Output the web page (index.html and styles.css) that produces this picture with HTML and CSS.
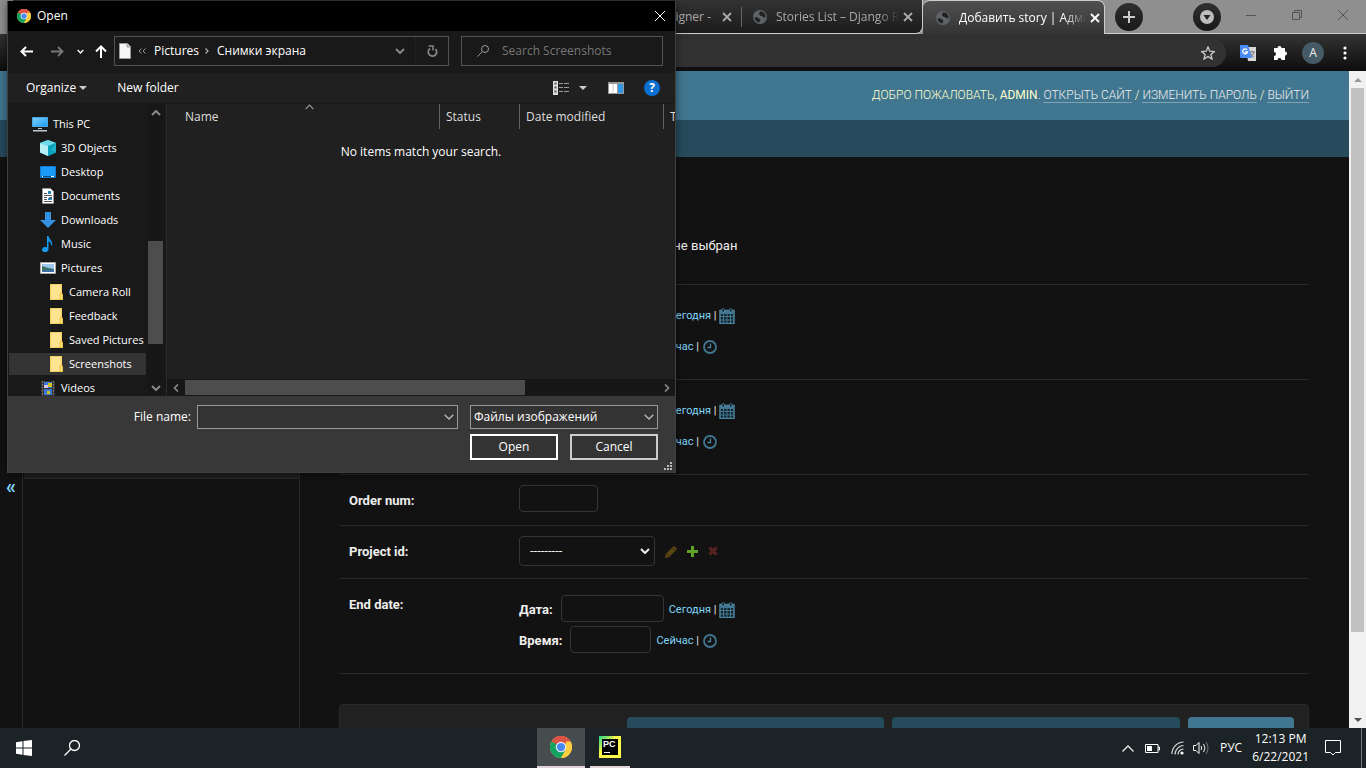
FILE: index.html
```html
<!DOCTYPE html>
<html lang="ru">
<head>
<meta charset="utf-8">
<title>Добавить story | Администрирование</title>
<link rel="stylesheet" href="styles.css">
</head>
<body>
<svg class="defs" aria-hidden="true">
  <defs>
    <linearGradient id="pc" x1="0" y1="0" x2="1" y2="1"><stop offset="0" stop-color="#21d789"/><stop offset=".3" stop-color="#b8ea5a"/><stop offset=".4" stop-color="#fcf84a"/></linearGradient>
    <linearGradient id="screen" x1="0" y1="0" x2="1" y2="1"><stop offset="0" stop-color="#7cd0ff"/><stop offset="1" stop-color="#1b9bf0"/></linearGradient>
    <symbol id="chrome" viewBox="0 0 24 24">
      <circle cx="12" cy="12" r="12" fill="#ffcd40"/>
      <path d="M12 12 1.6 6A12 12 0 0 1 22.4 6z" fill="#de5347"/><path d="M12 6h10.4A12 12 0 0 0 1.6 6l5.2 9z" fill="#de5347"/>
      <path d="M1.6 6A12 12 0 0 0 12 24l5.2-9L12 12 6.8 9z" fill="#14a361"/><path d="M1.6 6 6.8 15 12 12z" fill="#14a361"/>
      <path d="M22.4 6A12 12 0 0 1 12 24l5.2-9V6z" fill="#ffcd40"/>
      <circle cx="12" cy="12" r="5.7" fill="#f1f1f1"/><circle cx="12" cy="12" r="4.5" fill="#4688f4"/>
    </symbol>
    <symbol id="globe" viewBox="0 0 14 14"><circle cx="7" cy="7" r="7" fill="#5f6368"/><path d="M1.5 7.5c2-.8 3.600 0 4.200.8.500.8 2 .4 1.600 2-.3 1-.8 1.200-.8 2.200C3.500 12.300 1.600 10 1.500 7.500zM7.500 1.300C6 2.500 6.800 3.200 5.600 4c1.400.6 1.200 2 2.600 2s1.500 1.200 2.700 1.200c.8 0 1.300.5 1.700 0C12.700 4 10.500 1.500 7.500 1.300z" fill="#222"/></symbol>
    <symbol id="folder" viewBox="0 0 13 16"><path d="M0 0h12v10h1v6H0z" fill="#ffe48f"/><path d="M.5.5h11v9.500M.5 0v15.500h10" fill="none" stroke="#f2cf5f"/><path d="M10 10h2.500v5.500H10z" fill="#ffe48f" stroke="#e8bd3c"/></symbol>
    <symbol id="calendar" viewBox="0 0 16 16"><path d="M1 3h14v12.500H1z" fill="#16242c"/><path d="M1 5h14M1 8.500h14M1 12h14M4.500 5v10M8 5v10M11.500 5v10" stroke="#417690" fill="none"/><path d="M1 2.500h14v13H1z" fill="none" stroke="#4a83a0" stroke-width="1.500"/><path d="M1 3h14v3H1z" fill="#417690"/><path d="M3 4V1.500q1.300-2 2.600 0V4zM10.400 4V1.500q1.300-2 2.600 0V4z" fill="#121212" stroke="#4a83a0"/></symbol>
    <symbol id="clock" viewBox="0 0 14 14"><circle cx="7" cy="7" r="6" fill="none" stroke="#417690" stroke-width="1.800"/><path d="M7.500 3.500v4h-3" fill="none" stroke="#4a83a0" stroke-width="1.300"/></symbol>
    <symbol id="down" viewBox="0 0 10 6"><path d="m.7.700 4.300 4.300 4.300-4.300" fill="none" stroke="currentColor" stroke-width="1.300"/></symbol>
    <symbol id="bold-down" viewBox="0 0 10 6"><path d="m1 1 4 4 4-4" fill="none" stroke="currentColor" stroke-width="2"/></symbol>
    <symbol id="close" viewBox="0 0 10 10"><path d="m1 1 8 8M9 1l-8 8" stroke="currentColor" stroke-width="1.800"/></symbol>
    <symbol id="thin-close" viewBox="0 0 10 10"><path d="m0 0 10 10M10 0 0 10" stroke="currentColor"/></symbol>
  </defs>
</svg>

<header class="browser">
  <div class="tabs">
    <div class="tab"></div><div class="tab"></div><div class="tab"></div>
    <div class="tab"><svg class="fav"><use href="#globe"/></svg><span class="tab-title tab-end">Designer -</span><button class="tab-close" aria-label="Close tab"><svg><use href="#close"/></svg></button></div>
    <div class="tab last"><svg class="fav"><use href="#globe"/></svg><span class="tab-title">Stories List – Django R</span><button class="tab-close" aria-label="Close tab"><svg><use href="#close"/></svg></button></div>
    <div class="tab active"><svg class="fav"><use href="#globe"/></svg><span class="tab-title">Добавить story | Адми</span><button class="tab-close" aria-label="Close tab"><svg><use href="#close"/></svg></button></div>
    <div class="strip">
      <button class="round" aria-label="New tab"><svg width="12" height="12" viewBox="0 0 12 12"><path d="M6 0v12M0 6h12" stroke="#ccc" stroke-width="2"/></svg></button>
      <button class="round media" aria-label="Media"><svg width="14" height="14" viewBox="0 0 14 14"><circle cx="7" cy="7" r="7" fill="#bdbdbd"/><path d="M3.500 5h7L7 10z" fill="#222"/></svg></button>
      <div class="wins">
        <button aria-label="Minimize"><svg width="10" height="10" viewBox="0 0 10 10"><path d="M0 5.500h10" stroke="#555"/></svg></button>
        <button aria-label="Restore"><svg width="10" height="10" viewBox="0 0 10 10"><path d="M.5 2.500h7v7h-7zM2.500 2.500v-2h7v7h-2" fill="none" stroke="#555"/></svg></button>
        <button aria-label="Close"><svg width="10" height="10"><use href="#thin-close"/></svg></button>
      </div>
    </div>
  </div>
  <div class="toolbar">
    <div class="omnibox"><svg width="14" height="14" viewBox="0 0 14 14"><path d="m7 1 1.800 4.200 4.600.4-3.500 3 1.100 4.400-4-2.400L3 13l1.100-4.400-3.500-3 4.600-.4z" fill="none" stroke="#ccc" stroke-width="1.300"/></svg></div>
    <button class="tool" aria-label="Translate"><svg width="16" height="16" viewBox="0 0 16 16"><path d="M6 2h10v14H8z" fill="#d8d8d8"/><path d="M9 7h6M12 5.500V7M14 7c-.5 2.500-2 4-4 5M10.500 8c.5 2 2 3.500 3.500 4" stroke="#777" fill="none"/><path d="M0 0h8l4 13H1q-1 0-1-1z" fill="#4b8bf5"/><path d="M7.200 5A2.400 2.400 0 1 0 7.500 7H5" fill="none" stroke="#fff" stroke-width="1.300"/></svg></button>
    <button class="tool" aria-label="Extensions"><svg width="15" height="15" viewBox="0 0 15 15"><path d="M1 3h3.500a2 2 0 1 1 4 0H12v3.500a2 2 0 1 1 0 4V15H8.500a2 2 0 1 0-4 0H1v-4a2 2 0 1 0 0-4z" fill="#fff"/></svg></button>
    <button class="avatar">A</button>
    <button class="tool dots" aria-label="Menu"><svg width="4" height="14" viewBox="0 0 4 14"><g fill="#fff"><circle cx="2" cy="2" r="1.600"/><circle cx="2" cy="7" r="1.600"/><circle cx="2" cy="12" r="1.600"/></g></svg></button>
  </div>
</header>

<div class="viewport">
  <div class="admin">
    <div class="admin-header">
      <div class="user-tools">Добро пожаловать, <strong>admin</strong>. <a href="#site">Открыть сайт</a> / <a href="#password">Изменить пароль</a> / <a href="#logout">Выйти</a></div>
    </div>
    <div class="crumbs"></div>
    <div class="body">
      <button class="toggle" aria-label="Toggle navigation"><span>«</span></button>
      <nav class="sidebar"><div class="module"></div></nav>
      <main class="content">
        <div class="row file-row"><div class="fields"><span>Файл не выбран</span></div></div>
        <div class="row date-row"><div class="fields">
          <div class="line"><label for="d1">Дата:</label><input id="d1" class="date"><span class="hint"><a href="#today">Сегодня</a> |</span><svg class="cal"><use href="#calendar"/></svg></div>
          <div class="line"><label for="t1">Время:</label><input id="t1" class="time"><span class="hint"><a href="#now">Сейчас</a> |</span><svg class="clk"><use href="#clock"/></svg></div>
        </div></div>
        <div class="row date-row"><div class="fields">
          <div class="line"><label for="d2">Дата:</label><input id="d2" class="date"><span class="hint"><a href="#today">Сегодня</a> |</span><svg class="cal"><use href="#calendar"/></svg></div>
          <div class="line"><label for="t2">Время:</label><input id="t2" class="time"><span class="hint"><a href="#now">Сейчас</a> |</span><svg class="clk"><use href="#clock"/></svg></div>
        </div></div>
        <div class="row order"><label class="name" for="order">Order num:</label><div class="fields"><input id="order" class="num"></div></div>
        <div class="row project"><label class="name" for="project">Project id:</label><div class="fields related">
          <span class="select"><select id="project"><option>---------</option></select><svg><use href="#bold-down"/></svg></span>
          <a href="#edit" aria-label="Edit"><svg width="12" height="12" viewBox="0 0 12 12"><path d="m0 12 .8-4L8 .8q1-1 2 0l1.200 1.200q1 1 0 2L4 11.200z" fill="#5c4712"/><path d="m2 8 2 2M7.500 2l2.500 2.500" stroke="#2c220b"/></svg></a>
          <a href="#add" aria-label="Add"><svg width="11" height="11" viewBox="0 0 11 11"><path d="M4 0h3v4h4v3H7v4H4V7H0V4h4z" fill="#5fa225"/></svg></a>
          <a href="#delete" aria-label="Delete"><svg width="10" height="10" viewBox="0 0 10 10"><path d="m1.500 1.500 7 7m0-7-7 7" stroke="#552222" stroke-width="3.200"/></svg></a>
        </div></div>
        <div class="row date-row"><label class="name" for="d3">End date:</label><div class="fields">
          <div class="line"><label for="d3">Дата:</label><input id="d3" class="date"><span class="hint"><a href="#today">Сегодня</a> |</span><svg class="cal"><use href="#calendar"/></svg></div>
          <div class="line"><label for="t3">Время:</label><input id="t3" class="time"><span class="hint"><a href="#now">Сейчас</a> |</span><svg class="clk"><use href="#clock"/></svg></div>
        </div></div>
        <div class="submit"><button class="b-another" aria-label="Save and add another"></button><button class="b-continue" aria-label="Save and continue"></button><button class="b-save" aria-label="Save"></button></div>
      </main>
    </div>
  </div>
  <div class="page-scroll"><i class="tri up"></i><i class="thumb"></i><i class="tri dn"></i></div>
</div>

<footer class="taskbar">
  <button class="start" aria-label="Start"><svg width="16" height="16" viewBox="0 0 16 16"><path d="M0 2.200 6.500 1.300v6.200H0zM7.500 1.100 16 0v7.500H7.500zM0 8.500h6.500v6.200L0 13.800zM7.500 8.500H16V16l-8.500-1.100z" fill="#fff"/></svg></button>
  <button class="find" aria-label="Search"><svg width="16" height="16" viewBox="0 0 16 16"><circle cx="10.500" cy="5.500" r="5" fill="none" stroke="#fff" stroke-width="1.300"/><path d="M7 9 .5 15.500" stroke="#fff" stroke-width="1.300"/></svg></button>
  <div class="apps">
    <button class="app current" aria-label="Chrome"><svg width="22" height="22"><use href="#chrome"/></svg></button>
    <button class="app" aria-label="PyCharm"><svg width="22" height="22" viewBox="0 0 22 22"><path d="M0 0h22v22H0z" fill="url(#pc)"/><path d="M3 3h16v16H3z"/><text x="4" y="11" class="pc">PC</text><path d="M5 16h6v1H5z" fill="#fff"/></svg></button>
  </div>
  <div class="tray">
    <svg width="12" height="7" viewBox="0 0 12 7"><path d="m.5 6.500 5.500-5.500 5.500 5.500" fill="none" stroke="#eee" stroke-width="1.300"/></svg>
    <svg class="battery" width="15" height="9" viewBox="0 0 15 9"><path d="M.5.500h12.500v8H.5zM13 3h1.500v3H13" fill="none" stroke="#fff"/><path d="M2 2h5v5H2z" fill="#fff"/></svg>
    <svg class="wifi" width="13" height="14" viewBox="0 0 13 14"><path d="M1 13A12 12 0 0 1 12.500 1M4 13.500a9 9 0 0 1 8.500-9M7 13.500A6 6 0 0 1 12.500 8" fill="none" stroke="#ddd" stroke-width="1.200"/><circle cx="11" cy="12" r="1.600" fill="#fff"/></svg>
    <svg class="sound" width="17" height="14" viewBox="0 0 17 14"><path d="M.5 4.500h2.500L6 1.500v11L3 9.500H.5z" fill="none" stroke="#fff"/><path d="M8 5q1.500 2 0 4M10.500 3q3 4 0 8" fill="none" stroke="#eee"/><path d="M13 1q4 6 0 12" fill="none" stroke="#777"/></svg>
    <span class="lang">РУС</span>
    <span class="time-now">12:13 PM<br>6/22/2021</span>
    <svg class="note" width="16" height="16" viewBox="0 0 16 16"><path d="M.5.500h15v12h-5L8 15l-2.500-2.500h-5z" fill="none" stroke="#fff"/></svg>
    <i class="peek"></i>
  </div>
</footer>

<section class="dialog" role="dialog" aria-label="Open">
  <div class="d-title"><svg width="14" height="14"><use href="#chrome"/></svg><span>Open</span><button aria-label="Close"><svg width="10" height="10"><use href="#thin-close"/></svg></button></div>
  <div class="d-nav">
    <button class="back" aria-label="Back"><svg width="13" height="11" viewBox="0 0 13 11"><path d="M13 5.500H1.500M6 1 1.500 5.500 6 10" fill="none" stroke="#fff" stroke-width="2"/></svg></button>
    <button class="fwd" aria-label="Forward"><svg width="13" height="11" viewBox="0 0 13 11"><path d="M0 5.500h11.500M7 1l4.500 4.500L7 10" fill="none" stroke="#777" stroke-width="1.800"/></svg></button>
    <button class="recent" aria-label="Recent"><svg width="7" height="5"><use href="#bold-down"/></svg></button>
    <button class="upward" aria-label="Up"><svg width="12" height="13" viewBox="0 0 12 13"><path d="M6 13V1.500M1 6.500l5-5 5 5" fill="none" stroke="#fff" stroke-width="2"/></svg></button>
    <div class="address">
      <svg width="12" height="16" viewBox="0 0 12 16"><path d="M.5.500h8l3 3v12H.5z" fill="#f5f5f5" stroke="#999"/><path d="M8 .5V4h3.500" fill="#ccc" stroke="#999"/></svg>
      <svg class="laq" width="8" height="6" viewBox="0 0 8 6"><path d="M3.500.500 1 3l2.500 2.500M7.500.500 5 3l2.500 2.500" fill="none" stroke="#999"/></svg>
      <span>Pictures</span>
      <svg class="sep" width="4" height="6" viewBox="0 0 4 6"><path d="M.5.500 3 3 .5 5.500" fill="none" stroke="#aaa" stroke-width="1.300"/></svg>
      <span>Снимки экрана</span>
      <svg class="hist" width="10" height="6"><use href="#bold-down"/></svg>
      <button class="refresh" aria-label="Refresh"><svg width="11" height="12" viewBox="0 0 11 12"><path d="M3 3.500A4.200 4.200 0 1 0 8.500 4" fill="none" stroke="#888" stroke-width="1.700"/><path d="M1.500 1H6v4.500" fill="none" stroke="#888" stroke-width="1.500"/></svg></button>
    </div>
    <div class="search"><svg width="12" height="12" viewBox="0 0 12 12"><circle cx="8" cy="4" r="3.500" fill="none" stroke="#999"/><path d="M5.500 6.500.500 11.500" stroke="#999"/></svg><input aria-label="Search" placeholder="Search Screenshots"></div>
  </div>
  <div class="d-tools">
    <button>Organize <i class="tri dn"></i></button><button class="newf">New folder</button>
    <button class="view" aria-label="View"><svg width="17" height="14" viewBox="0 0 17 14"><path d="M0 0h5v14H0z" fill="#ddd"/><path d="M1.500 1.500h2v2h-2zM1.500 5.500h2v2h-2zM1.500 9.500h2v2h-2z" fill="#555"/><path d="M6 2.500h4m1 0h5M6 6.500h4m1 0h5M6 10.500h4m1 0h5" stroke="#999"/></svg><i class="tri dn"></i></button>
    <button class="pane" aria-label="Preview"><svg width="16" height="12" viewBox="0 0 16 12"><path d="M0 0h16v12H0z" fill="#999"/><path d="M1 2h8v9H1z" fill="#fff"/><path d="M10 2h5v9h-5z" fill="#2f9ae8"/><path d="M5 2v9" stroke="#ccc"/></svg></button>
    <button class="help" aria-label="Help"><span>?</span></button>
  </div>
  <div class="d-main">
    <ul class="tree">
      <li class="l0"><svg width="16" height="16" viewBox="0 0 16 16"><path d="M.5 1.500h15v9H.5z" fill="url(#screen)" stroke="#4ba9e8"/><path d="M6 12h4v1H6zM1 14h14v1.500H1z" fill="#b8cbd8"/></svg>This PC</li>
      <li><svg width="16" height="16" viewBox="0 0 16 16"><path d="M0 3 8 0l8 3v9.500L8 16l-8-3.500z" fill="#20b2c8"/><path d="M0 3 8 0l8 3-8 3z" fill="#6fdbe8"/><path d="M0 3l8 3v10l-8-3.500z" fill="#b5eef4"/><path d="m8 6 8-3-5 7 5 2.500L8 16z" fill="#08a3bb"/></svg>3D Objects</li>
      <li><svg width="16" height="16" viewBox="0 0 16 16"><path d="M.5 2.500h15v11H.5z" fill="#1b9bf5" stroke="#0d7ed0"/><path d="M1 12h14v1H1z" fill="#064f90"/><path d="M2 12h1v1H2zM11 12h3v1h-3z" fill="#fff"/></svg>Desktop</li>
      <li><svg width="16" height="16" viewBox="0 0 16 16"><path d="M2.500.500h8l3 3v12h-11z" fill="#fff" stroke="#999"/><path d="M4 5.500h3M4 7.500h8M4 9.500h3m5 0H9M4 11.500h3M4 13.500h8" stroke="#555"/><path d="M8 3h3v3H8zM8 10h4v2H8z" fill="#2780b8"/></svg>Documents</li>
      <li><svg width="16" height="16" viewBox="0 0 16 16"><path d="M5 0h6v8h5l-8 8-8-8h5z" fill="#3391e2"/></svg>Downloads</li>
      <li><svg width="16" height="16" viewBox="0 0 16 16"><path d="M7 0h1.500c.5 3.500 4.500 4.500 3.500 9.500h-1c.3-2.500-.8-3.500-2.500-4.500v8c0 4-6.500 4-6.500.8 0-2.500 2.500-3.500 5-2.500z" fill="#159cf0"/></svg>Music</li>
      <li><svg width="16" height="16" viewBox="0 0 16 16"><path d="M.5 2.500h15v11H.5z" fill="#fff" stroke="#aaa"/><path d="M2 4h12v8H2z" fill="#9cc8ee"/><path d="M2 6q5 2 12 3v3H2z" fill="#3e6f65"/><path d="M2 11q6-2 12-1v2H2z" fill="#3b6fae"/></svg>Pictures</li>
      <li class="l2"><svg class="fold"><use href="#folder"/></svg>Camera Roll</li>
      <li class="l2"><svg class="fold"><use href="#folder"/></svg>Feedback</li>
      <li class="l2"><svg class="fold"><use href="#folder"/></svg>Saved Pictures</li>
      <li class="l2 sel"><svg class="fold"><use href="#folder"/></svg>Screenshots</li>
      <li><svg width="16" height="16" viewBox="0 0 16 16"><path d="M1 1h14v15H1z" fill="#333"/><path d="M2.500 1v15M13.500 1v15" stroke="#888" stroke-dasharray="1.500 1.500"/><path d="M4 2h8v6H4zM4 9h8v6H4z" fill="#3b78d8"/><path d="M4 5h4v3H4z" fill="#d8c5e8"/><path d="M8 3h4v4H8zM7 11h3v3H7z" fill="#d0c020"/></svg>Videos</li>
    </ul>
    <div class="v-scroll"><svg class="flip"><use href="#bold-down"/></svg><i></i><svg><use href="#bold-down"/></svg></div>
    <div class="list">
      <div class="cols"><span class="c-name">Name<svg class="sort flip"><use href="#down"/></svg></span><span class="c-status">Status</span><span class="c-date">Date modified</span><span class="c-type">Type</span></div>
      <p class="empty">No items match your search.</p>
      <div class="h-scroll"><svg width="6" height="8" viewBox="0 0 6 8"><path d="M5 .5 1.500 4 5 7.500" fill="none" stroke="#888" stroke-width="1.700"/></svg><i></i><svg width="6" height="8" viewBox="0 0 6 8"><path d="M1 .5 4.500 4 1 7.500" fill="none" stroke="#888" stroke-width="1.700"/></svg></div>
    </div>
  </div>
  <div class="d-foot">
    <div class="f-row"><label for="fname">File name:</label><span class="combo fname"><input id="fname"><svg><use href="#down"/></svg></span><span class="combo ftype"><select aria-label="Тип файлов"><option>Файлы изображений</option></select><svg><use href="#down"/></svg></span></div>
    <div class="f-row end"><button class="primary">Open</button><button>Cancel</button></div>
    <svg class="grip" width="8" height="8" viewBox="0 0 8 8"><path d="M6 0h2v2H6zM6 3h2v2H6zM6 6h2v2H6zM3 3h2v2H3zM3 6h2v2H3zM0 6h2v2H0z" fill="#bbb"/></svg>
  </div>
</section>
</body>
</html>
```

FILE: styles.css
```css
* { box-sizing: border-box; }
body { margin: 0; height: 100vh; display: flex; flex-direction: column; overflow: hidden; background: #121212; color: #eee; font: 12px/16px "Open Sans", "Noto Sans", sans-serif; }
button, input, select { font: inherit; color: inherit; margin: 0; padding: 0; border: 0; background: none; outline: 0; }
svg { display: block; flex: none; }
.defs { position: absolute; width: 0; height: 0; }
i { display: block; flex: none; }
.tri { width: 0; height: 0; border: 4px solid transparent; }
.tri.up { border-top: 0; border-bottom: 4px solid #999; }
.tri.dn { border-bottom: 0; border-top: 4px solid #ccc; }

/* Browser frame */
.browser { flex: none; }
.tabs { display: flex; height: 34px; padding-left: 13px; background: #8f8f8f; }
.tab { width: 182px; flex: none; display: flex; align-items: center; padding: 0 9px 0 12px; color: #aaa; background: linear-gradient(#333, #1b1b1b); border-bottom: 1px solid #ccc; position: relative; }
.tab + .tab::before { content: ""; position: absolute; left: 0; top: 7px; width: 1px; height: 20px; background: #666; }
.tab.last { border-radius: 0 0 7px 0; border-right: 1px solid #ccc; }
.tab.active { color: #fff; background: linear-gradient(#505050, #343434); border: 1px solid #ccc; border-left: 0; border-bottom: 0; border-radius: 7px 7px 0 0; padding: 0 8px 0 13px; }
.tab.active::before { display: none; }
.fav { width: 14px; height: 14px; }
.tab-title { flex: 1; margin: 0 0 0 9px; white-space: nowrap; mask-image: linear-gradient(90deg, #000 80%, transparent 97%); }
.tab-end { text-align: right; mask-image: none; margin-right: 11px; }
.tab-close svg { width: 10px; height: 10px; }
.strip { flex: 1; display: flex; align-items: center; padding: 0 18px 0 10px; border-bottom: 1px solid #ccc; }
.round { width: 28px; height: 28px; border-radius: 50%; background: linear-gradient(#303030, #181818); display: grid; place-items: center; }
.media { margin: 0 auto 0 50px; }
.wins { display: flex; gap: 36px; color: #555; padding-bottom: 4px; }
.toolbar { height: 37px; display: flex; align-items: center; padding-right: 19px; background: linear-gradient(#333, #0d0d0d); }
.omnibox { flex: 1; height: 28px; margin-left: 110px; border-radius: 14px; background: #323232; display: flex; align-items: center; justify-content: flex-end; padding-right: 11px; }
.tool { margin-left: 14px; }
.tool + .tool { margin-left: 17px; }
.avatar { width: 22px; height: 22px; margin: 0 0 0 14px; border-radius: 50%; background: #455a64; text-align: center; }
.toolbar .dots { margin-left: 19px; }

/* Admin page */
.viewport { flex: 1; min-height: 0; display: flex; }
.admin { flex: 1; min-width: 0; display: flex; flex-direction: column; font-family: Roboto, sans-serif; font-size: 13px; }
.page-scroll { width: 17px; flex: none; background: #f1f1f1; display: flex; flex-direction: column; align-items: center; padding: 7px 0 6px; }
.page-scroll .thumb { width: 13px; flex: 86 0 0; margin: 6px 0 0; background: #c1c1c1; }
.page-scroll .tri.dn { border-top-color: #505050; margin-top: 86px; }
.admin-header { flex: none; height: 49px; padding: 0 40px; background: #417690; display: flex; align-items: center; justify-content: flex-end; }
.user-tools { font-size: 12px; font-weight: 300; text-transform: uppercase; color: #ffc; line-height: 15px; }
.user-tools a { color: #eee; text-decoration: none; border-bottom: 1px solid #7fa3b5; }
.crumbs { flex: none; height: 37px; background: #264b5d; }
.body { flex: 1; min-height: 0; display: flex; overflow: hidden; }
.toggle { width: 23px; flex: none; border-right: 1px solid #2a2a2a; color: #81d4fa; font-size: 20px; font-weight: 700; line-height: 20px; padding-top: 86px; }
.sidebar { width: 277px; flex: none; border-right: 1px solid #2a2a2a; }
.module { height: 322px; margin-left: 1px; background: #212121; border-bottom: 1px solid #2a2a2a; }
.content { flex: 1; padding: 64px 40px 0 39px; }
.row { display: flex; padding: 10px; border-bottom: 1px solid #2a2a2a; }
.name { width: 170px; line-height: 30px; padding-top: 1px; }
.row label { font-weight: 700; color: #eee; }
.fields { flex: 1; }
.row > .fields:first-child { margin-left: 170px; }
.file-row { padding: 11px 10px 24px; }
.file-row .fields { line-height: 28px; padding-left: 119px; }
.order { padding-bottom: 9px; }
.project { padding-bottom: 11px; }
.date-row { padding-bottom: 20px; }
.date-row .fields { padding-top: 6px; display: grid; gap: 4px; }
.line { display: flex; align-items: center; }
.line label { margin-right: 8px; padding-top: 2px; }
.row input, .row select { height: 27px; border: 1px solid #353535; border-radius: 4px; background: #121212; padding: 0 8px; display: block; }
.row .num { width: 79px; }
.row .date { width: 103px; }
.row .time { width: 81px; }
.hint { font-size: 11px; margin: 0 2px 0 5px; padding-top: 3px; white-space: nowrap; }
.hint a { color: #81d4fa; text-decoration: none; }
.cal { width: 16px; height: 16px; margin-top: 2px; }
.clk { width: 14px; height: 14px; margin: 2px 0 0 2px; }
.related { display: flex; align-items: flex-start; }
.related a { margin-left: 10px; padding-top: 10px; }
.select, .combo { position: relative; display: block; }
.row select { width: 136px; height: 30px; padding-left: 10px; appearance: none; }
.select svg { position: absolute; right: 5px; top: 12px; width: 10px; height: 6px; }
.submit { display: flex; justify-content: flex-end; gap: 8px; margin-top: 30px; padding: 12px 14px; background: #212121; border: 1px solid #2a2a2a; border-radius: 4px; }
.submit button { height: 35px; border-radius: 4px; background: #264b5d; }
.b-another { width: 257px; }
.b-continue { width: 288px; }
.submit .b-save { width: 106px; background: #417690; }

/* Taskbar */
.taskbar { height: 40px; flex: none; display: flex; background: #1c2326; color: #fff; }
.start, .find { width: 48px; display: grid; place-items: center; }
.apps { margin-left: 441px; display: flex; gap: 5px; }
.app { width: 40px; height: 40px; display: grid; place-items: center; border-bottom: 2px solid #e0d3d8; }
.current { width: 48px; background: #474c4f; }
.pc { font: bold 9px "Liberation Sans", sans-serif; fill: #fff; }
.tray { margin-left: auto; display: flex; align-items: center; padding-right: 4px; }
.battery, .wifi { margin-left: 11px; }
.sound { margin-left: 9px; }
.lang { margin-left: 10px; }
.time-now { margin-left: 10px; text-align: center; line-height: 18px; white-space: nowrap; }
.note { margin-left: 16px; }
.peek { width: 1px; height: 40px; background: #777; margin-left: 20px; }

/* File dialog window */
.dialog { position: absolute; left: 7px; top: 1px; width: 669px; height: 472px; display: flex; flex-direction: column; border: 1px solid #404040; border-top: 0; background: #191919; color: #fff; box-shadow: 0 2px 8px rgba(0, 0, 0, .5); }
.d-title { height: 30px; flex: none; background: #000; display: flex; align-items: center; padding: 0 10px 0 9px; gap: 6px; }
.d-title button { margin-left: auto; }
.d-nav { height: 42px; flex: none; display: flex; align-items: center; padding: 0 12px 2px; }
.fwd { margin-left: 18px; }
.recent { margin-left: 13px; }
.upward { margin-left: 11px; }
.address { width: 335px; height: 30px; margin-left: 7px; padding-left: 4px; border: 1px solid #535353; display: flex; align-items: center; }
.laq { margin: 0 8px 0 7px; }
.sep { margin: 0 8px 0 6px; }
.hist { margin-left: auto; color: #888; }
.refresh { height: 28px; width: 33px; margin-left: 10px; border-left: 1px solid #222; display: grid; place-items: center; }
.search { flex: 1; height: 30px; margin-left: 12px; padding-left: 15px; border: 1px solid #535353; display: flex; align-items: center; gap: 13px; }
.search input { width: 150px; }
.search input::placeholder { color: #777; opacity: 1; }
.d-tools { height: 31px; flex: none; padding: 0 15px 1px 18px; background: #202020; border-bottom: 1px solid #191919; display: flex; align-items: center; }
.d-tools button { display: flex; align-items: center; gap: 3px; }
.d-tools .newf { margin-left: 30px; }
.d-tools .view { margin-left: auto; gap: 9px; }
.pane { margin-left: 21px; }
.d-tools .help { width: 16px; height: 16px; margin-left: 20px; border-radius: 50%; background: #0a6fd0; justify-content: center; font-weight: 700; }
.d-main { flex: 1; min-height: 0; display: flex; }
.tree { width: 139px; margin: 0; padding: 8px 1px 0 1px; list-style: none; overflow: hidden; flex: none; white-space: nowrap; font-size: 11px; }
.tree li { height: 24px; display: flex; align-items: center; gap: 5px; padding-left: 31px; }
.tree .l0 { padding-left: 23px; }
.tree .l2 { padding-left: 41px; gap: 6px; }
.tree .sel { background: linear-gradient(#333, #333) 0 1px / 100% 22px no-repeat; }
.fold { width: 13px; height: 16px; }
.v-scroll { width: 17px; flex: none; display: flex; flex-direction: column; align-items: center; padding: 6px 0 5px; background: #171717; color: #888; }
.v-scroll i { width: 15px; height: 103px; margin: auto 0 41px; background: #4d4d4d; }
.v-scroll svg { width: 10px; height: 6px; }
.flip { transform: rotate(180deg); }
.list { flex: 1; min-width: 0; margin-left: 2px; background: #202020; border-left: 1px solid #2b2b2b; display: flex; flex-direction: column; }
.cols { height: 26px; flex: none; display: flex; overflow: hidden; color: #dedede; }
.cols span { flex: none; border-right: 1px solid #636363; padding: 5px 0 0 6px; height: 25px; position: relative; white-space: nowrap; }
.cols .c-name { width: 273px; padding-left: 18px; }
.c-status { width: 80px; }
.c-date { width: 144px; }
.sort { position: absolute; left: 138px; top: 0; width: 9px; height: 6px; color: #999; }
.empty { margin: 14px 0 0; text-align: center; }
.h-scroll { margin-top: auto; height: 17px; background: #171717; display: flex; align-items: center; padding: 0 5px 0 6px; }
.h-scroll i { width: 340px; height: 15px; margin: 0 auto 0 6px; background: #4d4d4d; }
.d-foot { height: 76px; flex: none; background: #383838; padding: 9px 17px 12px; position: relative; }
.f-row { display: flex; align-items: center; }
.f-row > label { flex: 1; text-align: right; margin-right: 6px; }
.combo input, .combo select { width: 100%; height: 24px; border: 1px solid #999; background: #333; padding: 0 3px; appearance: none; display: block; }
.fname { width: 261px; }
.ftype { width: 188px; margin-left: 12px; }
.combo svg { position: absolute; right: 4px; top: 9px; width: 10px; height: 6px; color: #bbb; }
.end { justify-content: flex-end; gap: 12px; margin-top: 5px; }
.end button { width: 88px; height: 26px; border: 2px solid #ccc; background: #333; }
.end .primary { border-color: #fff; }
.grip { position: absolute; right: 3px; bottom: 2px; }
```
